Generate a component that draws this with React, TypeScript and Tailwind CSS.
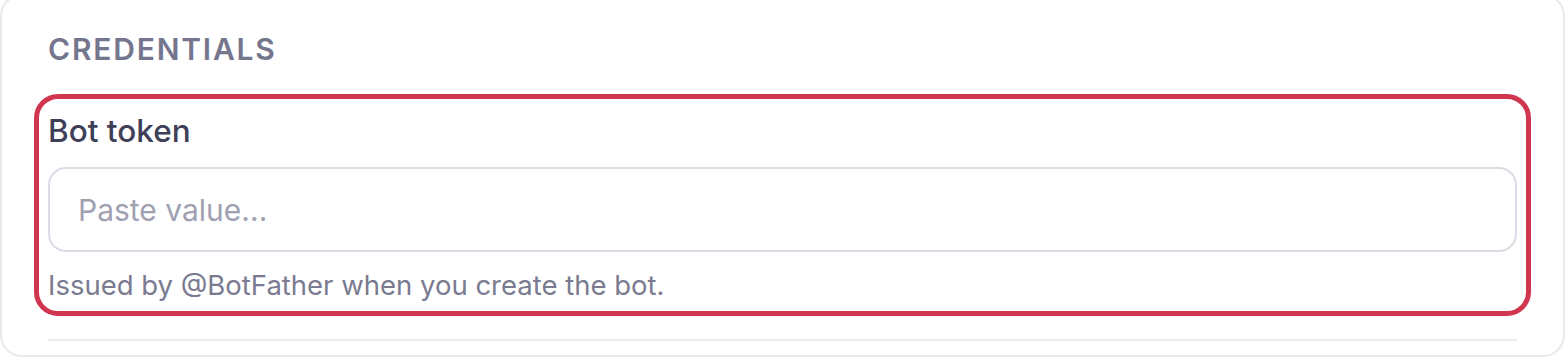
export default function App() {
  return (
    <div className="min-h-screen bg-white" style={{ fontFamily: 'Inter, "Noto Sans", sans-serif' }}>
      <div className="-mt-[6px] w-[1565px] rounded-[22px] border-2 border-[#e8e8ee] bg-white px-[46px] pt-[35px] pb-[14px]">
        <h3 className="text-[30px] leading-[36px] font-semibold tracking-[0.06em] text-[#75768e]">
          CREDENTIALS
        </h3>

        {/* highlighted field */}
        <div className="mt-[41px] rounded-[10px] pt-[5px] outline-[5px] outline-offset-[9px] outline-[#d13650]">
          <label className="block text-[31.5px] leading-[36px] font-medium text-[#3f4057]">Bot token</label>
          <input
            type="text"
            placeholder="Paste value..."
            className="mt-[18px] block h-[85px] w-full rounded-[18px] border-2 border-[#dcdce6] bg-white px-[28px] text-[30px] text-[#3d3e55] placeholder:text-[#9fa1b0] focus:outline-none"
          />
          <p className="mt-[17px] text-[27.5px] leading-[33px] text-[#7a7b90]">
            Issued by @BotFather when you create the bot.
          </p>
        </div>

        <div className="mt-[37px] h-[2px] bg-[#ececf1]" />
      </div>
    </div>
  );
}
